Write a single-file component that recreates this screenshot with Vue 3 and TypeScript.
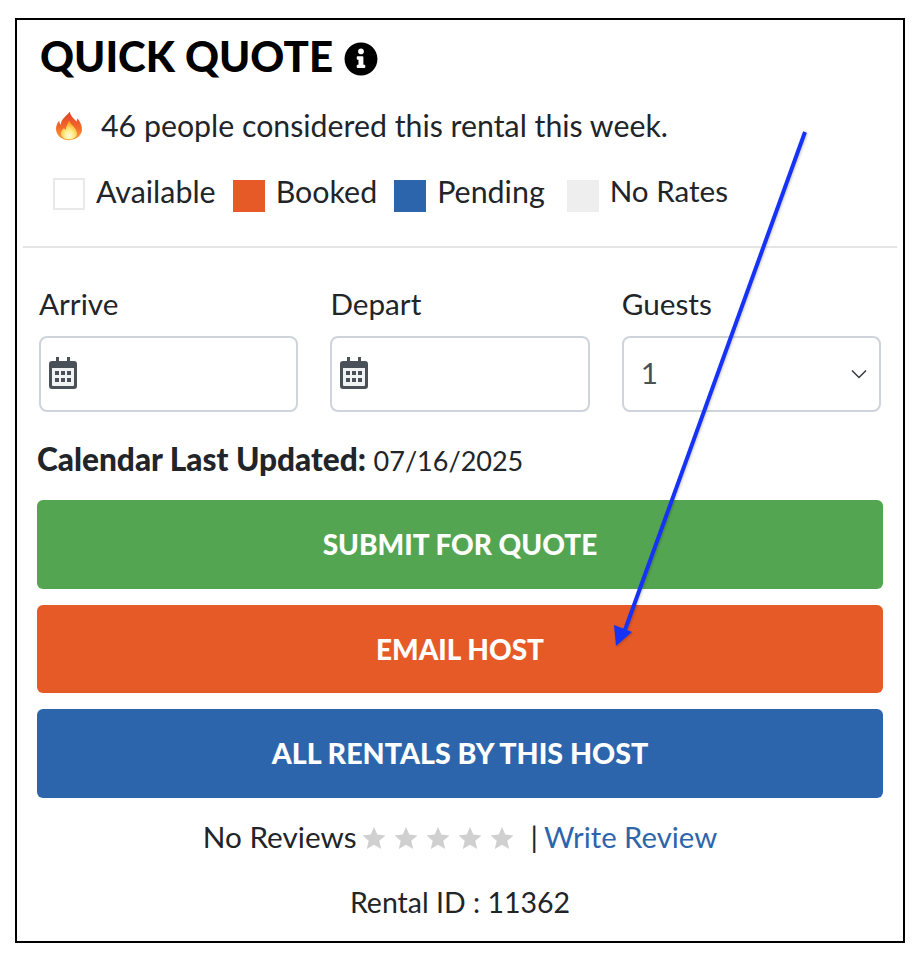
<script setup lang="ts">
const legend = [
  { label: 'Available', kind: 'free' },
  { label: 'Booked', kind: 'booked' },
  { label: 'Pending', kind: 'pending' },
  { label: 'No Rates', kind: 'none' },
]
const stars = [1, 2, 3, 4, 5]
const fields = ['Arrive', 'Depart']
</script>

<template>
  <div class="frame">
    <h2 class="title">
      QUICK QUOTE
      <svg class="info" viewBox="0 0 512 512">
        <path fill="#000" d="M256 8C119 8 8 119 8 256s111 248 248 248 248-111 248-248S393 8 256 8zm0 90c25 0 44 19 44 44s-19 44-44 44-44-19-44-44 19-44 44-44zm64 282c0 7-5 12-12 12H204c-7 0-12-5-12-12v-26c0-7 5-12 12-12h14v-76h-14c-7 0-12-5-12-12v-26c0-7 5-12 12-12h76c7 0 12 5 12 12v114h16c7 0 12 5 12 12v26z" />
      </svg>
    </h2>

    <div class="hot">
      <svg class="flame" viewBox="0 0 32 36">
        <defs>
          <linearGradient id="fire" x1="0" y1="0" x2="0" y2="1">
            <stop offset="0" stop-color="#e2402a" />
            <stop offset="0.55" stop-color="#f2692a" />
            <stop offset="1" stop-color="#f9a13a" />
          </linearGradient>
          <radialGradient id="core" cx="0.5" cy="0.8" r="0.65">
            <stop offset="0" stop-color="#fffde8" />
            <stop offset="0.5" stop-color="#ffe97a" />
            <stop offset="1" stop-color="#ffa92e" />
          </radialGradient>
        </defs>
        <path fill="url(#fire)" d="M17 1c1 6 5 8 8 12 1-1 1-3 1-4 4 4 6 9 6 14 0 7-7 13-16 13S0 30 0 22c0-4 2-8 4-10 0 2 1 4 2 5 0-7 6-10 11-16z" />
        <path fill="url(#core)" d="M16 12c1 4 10 9 10 16 0 4-5 7-10 7s-10-3-10-7c0-3 2-6 4-7 0 1 1 2 2 2 0-4 3-8 4-11z" />
      </svg>
      <span>46 people considered this rental this week.</span>
    </div>

    <div class="legend">
      <div v-for="item in legend" :key="item.label" class="legend-item" :class="item.kind">
        <span class="swatch"></span>
        <span>{{ item.label }}</span>
      </div>
    </div>

    <hr class="rule" />

    <div class="fields">
      <div v-for="name in fields" :key="name" class="field">
        <label>{{ name }}</label>
        <div class="box">
          <svg class="cal" viewBox="0 0 28 32">
            <path fill="#495057" d="M7 0h3v4h8V0h3v4h4a3 3 0 0 1 3 3v22a3 3 0 0 1-3 3H3a3 3 0 0 1-3-3V7a3 3 0 0 1 3-3h4V0z" />
            <path fill="#f1f2f3" d="M3 11h22v17a1 1 0 0 1-1 1H4a1 1 0 0 1-1-1V11z" />
            <path fill="#495057" d="M6 14h4v4H6zM12 14h4v4h-4zM18 14h4v4h-4zM6 21h4v4H6zM12 21h4v4h-4zM18 21h4v4h-4z" />
          </svg>
        </div>
      </div>
      <div class="field">
        <label>Guests</label>
        <div class="box select">
          <span class="value">1</span>
          <svg class="chev" viewBox="0 0 16 10">
            <path fill="none" stroke="#343a40" stroke-width="1.5" d="M1 1.5l7 7 7-7" />
          </svg>
        </div>
      </div>
    </div>

    <p class="updated"><strong>Calendar Last Updated:</strong> <span class="date">07/16/2025</span></p>

    <div class="actions">
      <button class="btn green">SUBMIT FOR QUOTE</button>
      <button class="btn orange">EMAIL HOST</button>
      <button class="btn blue">ALL RENTALS BY THIS HOST</button>
    </div>

    <div class="reviews">
      <span>No Reviews</span>
      <span class="stars">
        <svg v-for="s in stars" :key="s" class="star" viewBox="0 0 24 24">
          <path fill="#d0d0d0" d="M12 1l3.3 7.6 8.2.8-6.2 5.4 1.9 8.2L12 18.7 4.8 23l1.9-8.2L.5 9.4l8.2-.8z" />
        </svg>
      </span>
      <span class="sep">|</span>
      <a class="link">Write Review</a>
    </div>

    <p class="rental">Rental ID : 11362</p>

    <svg class="arrow" viewBox="0 0 922 962" width="922" height="962">
      <defs>
        <filter id="soft" x="-20%" y="-20%" width="140%" height="140%">
          <feDropShadow dx="1" dy="1" stdDeviation="1.2" flood-color="#000" flood-opacity="0.2" />
        </filter>
      </defs>
      <g filter="url(#soft)">
        <path d="M805 132L625 630" stroke="#1433f5" stroke-width="4" fill="none" />
        <path fill="#1433f5" d="M616 646L614 625 632 632z" />
      </g>
    </svg>
  </div>
</template>

<style scoped>
.frame {
  position: relative;
  box-sizing: border-box;
  width: 890px;
  height: 925px;
  margin: 18px 0 0 15px;
  border: 2px solid #000;
  font-family: "Lato", "Noto Sans", sans-serif;
  font-size: 29.7px;
  color: #212529;
  background: #fff;
}

.title {
  display: flex;
  align-items: center;
  gap: 11px;
  height: 72px;
  margin: 0;
  padding-left: 23px;
  font-size: 42px;
  font-weight: 900;
  color: #000;
}

.info {
  width: 34px;
  height: 34px;
  margin-top: 6px;
}

.hot {
  display: flex;
  align-items: center;
  gap: 19px;
  height: 38px;
  margin-top: 14px;
  padding-left: 39px;
  font-size: 30.3px;
}

.flame {
  width: 26px;
  height: 31px;
}

.legend {
  display: flex;
  align-items: flex-start;
  height: 40px;
  margin-top: 26px;
  padding-left: 36px;
  font-size: 30.4px;
}

.legend-item {
  display: flex;
  align-items: flex-start;
  gap: 11px;
  margin-right: 17px;
  line-height: 42px;
}

.swatch {
  box-sizing: border-box;
  width: 32px;
  height: 32px;
  margin-top: 10px;
}

.free .swatch {
  margin-top: 8px;
  border: 2px solid #e9e9e9;
}

.booked .swatch {
  background: #e55a26;
}

.pending .swatch {
  background: #2d65ad;
}

.none {
  font-size: 29.6px;
}

.none .swatch {
  background: #eeeeee;
  margin-left: 5px;
}

.rule {
  height: 2px;
  margin: 36px 6px 0;
  border: 0;
  background: #e5e5e5;
}

.fields {
  display: flex;
  gap: 32px;
  margin-top: 36px;
  padding-left: 22px;
}

.field {
  width: 259.4px;
}

.field label {
  display: block;
  height: 52px;
  line-height: 40px;
}

.box {
  display: flex;
  align-items: center;
  justify-content: space-between;
  box-sizing: border-box;
  height: 76px;
  padding: 0 8px;
  border: 2px solid #ced4da;
  border-radius: 8px;
}

.cal {
  width: 28px;
  height: 32px;
  margin-top: -3px;
}

.value {
  margin-left: 9px;
  margin-top: -4px;
  color: #495057;
}

.chev {
  width: 16px;
  height: 10px;
  margin-right: 4px;
}

.updated {
  height: 40px;
  margin: 27px 0 0;
  padding-left: 20px;
  line-height: 40px;
}

.updated strong {
  font-size: 31.6px;
  font-weight: 900;
}

.date {
  font-size: 27px;
}

.actions {
  display: flex;
  flex-direction: column;
  gap: 16px;
  margin-top: 21px;
  padding: 0 20px;
}

.btn {
  height: 88.5px;
  border: 0;
  border-radius: 6px;
  font: 900 28px "Lato", "Noto Sans", sans-serif;
  color: #fff;
}

.green {
  background: #54a551;
}

.orange {
  background: #e55a26;
}

.btn.blue {
  background: #2d65ad;
  font-size: 28.6px;
}

.reviews {
  display: flex;
  align-items: center;
  justify-content: center;
  height: 40px;
  margin-top: 19px;
}

.stars {
  display: flex;
  gap: 8px;
  margin: 0 17px 0 5px;
}

.star {
  width: 24px;
  height: 24px;
  margin-top: 3px;
}

.sep {
  margin-right: 6px;
}

.link {
  font-size: 29.3px;
  color: #2d65ad;
}

.rental {
  margin: 25px 0 0;
  font-size: 28.5px;
  line-height: 40px;
  text-align: center;
}

.arrow {
  position: absolute;
  top: -20px;
  left: -17px;
  pointer-events: none;
}
</style>
